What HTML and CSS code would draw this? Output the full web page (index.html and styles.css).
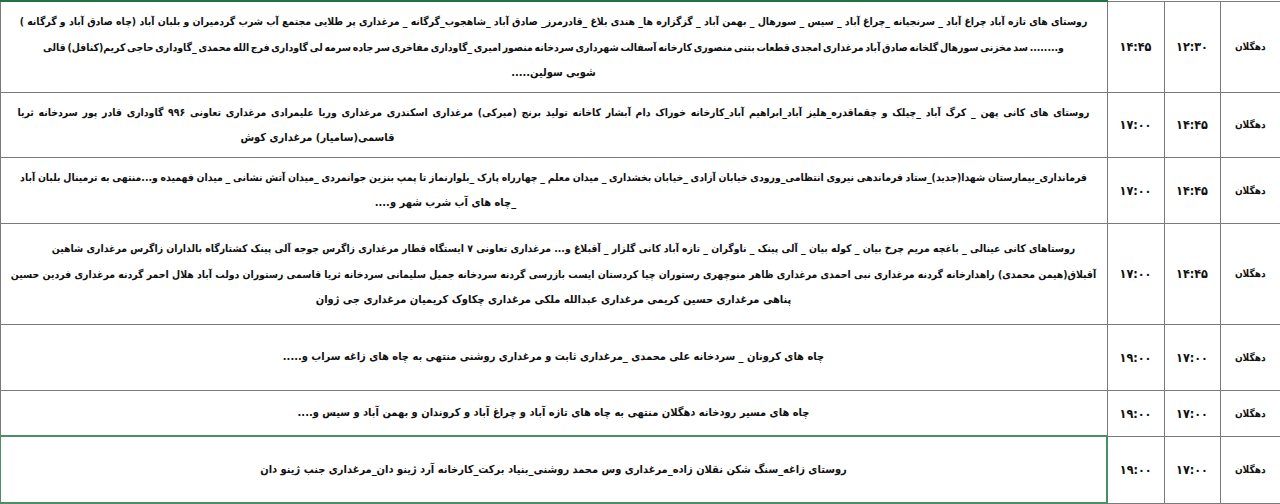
FILE: index.html
```html
<!DOCTYPE html>
<html lang="fa" dir="rtl">
<head>
<meta charset="utf-8">
<title>جدول خاموشی دهگلان</title>
<link rel="stylesheet" href="styles.css">
</head>
<body>
<table class="sheet">
  <colgroup>
    <col class="c-city">
    <col class="c-start">
    <col class="c-end">
    <col class="c-desc">
  </colgroup>
  <tbody>
    <tr class="r1">
      <td class="city">دهگلان</td>
      <td class="time">۱۲:۳۰</td>
      <td class="time">۱۴:۴۵</td>
      <td class="desc top">
        <div class="ln long w0">روستای های تازه آباد چراغ آباد _ سرنجیانه _چراغ آباد _ سیس _ سورهال _ بهمن آباد _ گزگزاره ها_ هندی بلاغ _قادرمرز_ صادق آباد _شاهجوب_گرگانه _ مرغداری پر طلایی مجتمع  آب شرب گردمیران و بلبان آباد (چاه صادق آباد و گرگانه )</div>
        <div class="ln long">و........ سد مخزنی سورهال گلخانه صادق آباد مرغداری امجدی قطعات بتنی منصوری کارخانه آسفالت شهرداری سردخانه منصور امیری _گاوداری مفاخری سر جاده سرمه لی گاوداری فرج الله محمدی _گاوداری حاجی کریم(کنافل) قالی</div>
        <div class="ln">شوبی سولین.....</div>
      </td>
    </tr>
    <tr class="r2">
      <td class="city">دهگلان</td>
      <td class="time">۱۴:۴۵</td>
      <td class="time">۱۷:۰۰</td>
      <td class="desc">
        <div class="ln long w15">روستای های کانی پهن _ کرگ آباد _چیلک و چقماقدره_هلیز آباد_ابراهیم آباد_کارخانه خوراک دام آبشار  کاخانه تولید برنج (میرکی) مرغداری اسکندری مرغداری وریا علیمرادی مرغداری تعاونی ۹۹۶ گاوداری قادر پور سردخانه ثریا</div>
        <div class="ln shift-a">قاسمی(سامیار) مرغداری کوش</div>
      </td>
    </tr>
    <tr class="r3">
      <td class="city">دهگلان</td>
      <td class="time">۱۴:۴۵</td>
      <td class="time">۱۷:۰۰</td>
      <td class="desc">
        <div class="ln long wn05">فرمانداری_بیمارستان شهدا(جدید)_ستاد فرماندهی نیروی انتظامی_ورودی خیابان آزادی _خیابان بخشداری _ میدان معلم _ چهارراه پارک _بلوارنماز تا پمپ بنزین جوانمردی _میدان آتش نشانی _ میدان فهمیده و...منتهی به ترمینال بلبان آباد</div>
        <div class="ln shift-b">_چاه های آب شرب شهر و....</div>
      </td>
    </tr>
    <tr class="r4">
      <td class="city">دهگلان</td>
      <td class="time">۱۴:۴۵</td>
      <td class="time">۱۷:۰۰</td>
      <td class="desc">
        <div class="ln long w0 nudge">روستاهای کانی عینالی _ باغچه مریم  چرخ بیان _ کوله بیان _ آلی پینک _ ناوگران _ تازه آباد کانی گلزار _ آقبلاغ و... مرغداری تعاونی ۷ ایستگاه قطار مرغداری زاگرس جوجه آلی پینک کشتارگاه بالداران زاگرس مرغداری شاهین</div>
        <div class="ln long w0">آقبلاق(هیمن محمدی) راهدارخانه گردنه  مرغداری نبی احمدی مرغداری ظاهر  منوچهری رستوران چیا کردستان ایست بازرسی گردنه سردخانه جمیل سلیمانی سردخانه ثریا قاسمی رستوران دولت آباد هلال احمر گردنه مرغداری فردین حسین</div>
        <div class="ln">پناهی مرغداری حسین کریمی مرغداری عبدالله ملکی مرغداری چکاوک کریمیان مرغداری جی ژوان</div>
      </td>
    </tr>
    <tr class="r5">
      <td class="city">دهگلان</td>
      <td class="time">۱۷:۰۰</td>
      <td class="time">۱۹:۰۰</td>
      <td class="desc">
        <div class="ln">چاه های کرونان _ سردخانه علی محمدی _مرغداری ثابت و مرغداری روشنی منتهی به چاه های  زاغه سراب و.....</div>
      </td>
    </tr>
    <tr class="r6">
      <td class="city dotted">دهگلان</td>
      <td class="time dotted">۱۷:۰۰</td>
      <td class="time dotted">۱۹:۰۰</td>
      <td class="desc">
        <div class="ln">چاه های مسیر رودخانه دهگلان منتهی به چاه های تازه آباد و چراغ آباد و کروندان و بهمن آباد و سیس و....</div>
      </td>
    </tr>
    <tr class="r7">
      <td class="city">دهگلان</td>
      <td class="time">۱۷:۰۰</td>
      <td class="time">۱۹:۰۰</td>
      <td class="desc selected">
        <div class="ln">روستای زاغه_سنگ شکن نقلان زاده_مرغداری وس محمد روشنی_بنیاد برکت_کارخانه آرد ژینو دان_مرغداری جنب ژینو دان</div>
      </td>
    </tr>
  </tbody>
</table>
</body>
</html>
```

FILE: styles.css
```css
html, body {
  margin: 0;
  padding: 0;
  background: #ffffff;
}

body {
  width: 1280px;
  height: 504px;
  overflow: hidden;
  font-family: "DejaVu Sans Condensed", "DejaVu Sans", sans-serif;
  font-weight: bold;
  color: #111111;
}

.sheet {
  direction: rtl;
  width: 1280px;
  table-layout: fixed;
  border-collapse: collapse;
}

.c-city { width: 60px; }
.c-start { width: 56px; }
.c-end { width: 57px; }
.c-desc { width: 1107px; }

.sheet td {
  border: 1px solid #7a7a7a;
  padding: 0;
  vertical-align: middle;
  text-align: center;
  overflow: hidden;
}

.sheet tr td:first-child {
  border-right: none;
}

.r1 { height: 91px; }
.r2 { height: 65px; }
.r3 { height: 66px; }
.r4 { height: 101px; }
.r5 { height: 66px; }
.r6 { height: 46px; }
.r7 { height: 67px; }

.city {
  font-size: 10px;
}

.time {
  font-size: 12.5px;
}

.desc {
  font-size: 11px;
}

.desc.top {
  border-top: 2px solid #217346;
}

.ln {
  line-height: 26px;
  white-space: nowrap;
}

.ln.long {
  font-size: 10.4px;
  word-spacing: -1.5px;
}

.ln.long.w0 { word-spacing: 0; }
.ln.long.w15 { word-spacing: 1.5px; }
.ln.long.wn05 { word-spacing: -0.5px; }

.nudge {
  padding-left: 20px;
}

.shift-a {
  padding-right: 472px;
}

.shift-b {
  padding-right: 216px;
}

.r6 .dotted {
  border-bottom: 1px dashed #9a9a9a;
}

.desc.selected {
  border: 2px solid #4a8f64;
}
```
